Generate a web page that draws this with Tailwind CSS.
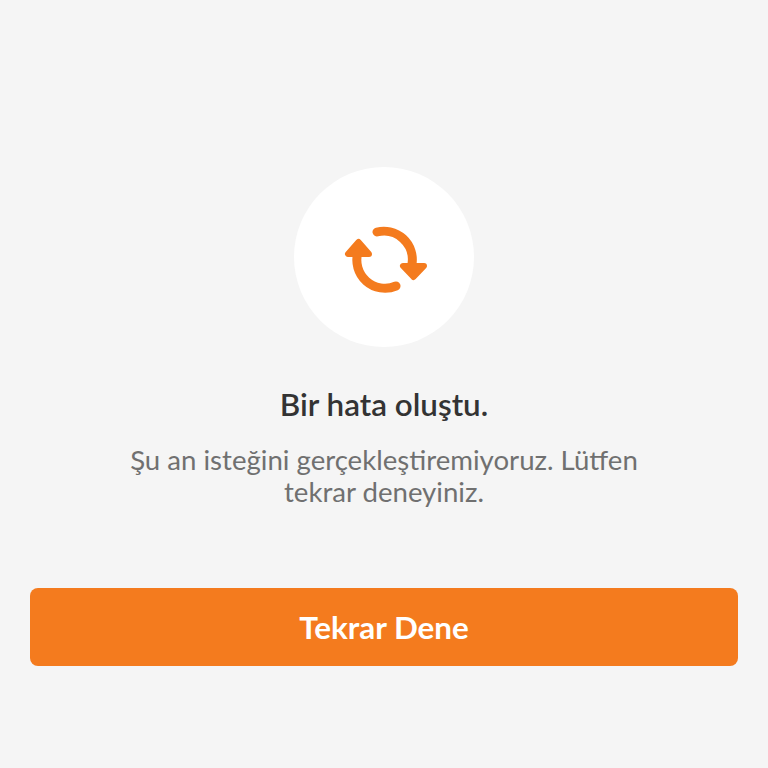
<!DOCTYPE html>
<html lang="tr">
<head>
  <meta charset="UTF-8" />
  <meta name="viewport" content="width=device-width, initial-scale=1.0"/>
  <title>Bir hata oluştu</title>
  <script src="https://cdn.jsdelivr.net/npm/@tailwindcss/browser@4"></script>
</head>
<body class="h-[768px] bg-[#f5f5f5] font-['Lato',sans-serif] overflow-hidden">
  <main class="flex flex-col items-center pt-[167px] px-[30px]">
    <!-- Retry icon -->
    <div class="w-[180px] h-[180px] rounded-full bg-white flex items-center justify-center">
      <svg class="w-[90px] h-[90px]" viewBox="0 -2 90 90" fill="none" stroke="#f47b1e" stroke-width="9" stroke-linecap="round" stroke-linejoin="round">
        <path d="M38 18 A28.5 28.5 0 0 1 73 50"/>
        <path d="M64 52 L85 52 L74.5 63 Z" fill="#f47b1e" stroke-width="6"/>
        <path d="M57 72 A28.2 28.2 0 0 1 19 38"/>
        <path d="M9 40 L30 40 L19.5 28 Z" fill="#f47b1e" stroke-width="6"/>
      </svg>
    </div>

    <h1 class="mt-[40px] text-[31.4px] leading-[34px] font-semibold text-[#333333]">Bir hata oluştu.</h1>
    <p class="mt-[23px] w-[540px] text-center text-[27.6px] leading-[32px] text-[#707070]">Şu an isteğini gerçekleştiremiyoruz. Lütfen tekrar deneyiniz.</p>

    <button class="mt-[80px] w-full h-[78px] pt-[1px] rounded-lg bg-[#f47b1e] text-white text-[31.4px] font-bold">Tekrar Dene</button>
  </main>
</body>
</html>
